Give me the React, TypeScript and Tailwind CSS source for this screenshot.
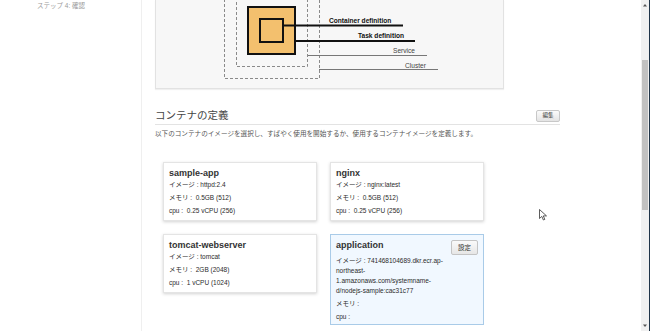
import React from 'react';

type Container = {
  name: string;
  lines: { label: string; value: string[] }[];
  highlight?: boolean;
};

const containers: Container[] = [
  {
    name: 'sample-app',
    lines: [
      { label: 'イメージ : ', value: ['httpd:2.4'] },
      { label: 'メモリ :  ', value: ['0.5GB (512)'] },
      { label: 'cpu :  ', value: ['0.25 vCPU (256)'] },
    ],
  },
  {
    name: 'nginx',
    lines: [
      { label: 'イメージ : ', value: ['nginx:latest'] },
      { label: 'メモリ :  ', value: ['0.5GB (512)'] },
      { label: 'cpu :  ', value: ['0.25 vCPU (256)'] },
    ],
  },
  {
    name: 'tomcat-webserver',
    lines: [
      { label: 'イメージ : ', value: ['tomcat'] },
      { label: 'メモリ :  ', value: ['2GB (2048)'] },
      { label: 'cpu :  ', value: ['1 vCPU (1024)'] },
    ],
  },
  {
    name: 'application',
    highlight: true,
    lines: [
      {
        label: 'イメージ : ',
        value: ['741468104689.dkr.ecr.ap-', 'northeast-', '1.amazonaws.com/systemname-', 'd/nodejs-sample:cac31c77'],
      },
      { label: 'メモリ : ', value: [''] },
      { label: 'cpu : ', value: [''] },
    ],
  },
];

const Diagram: React.FC = () => (
  <svg width="349" height="88" viewBox="0 0 349 88" className="block">
    {/* cluster / service boundaries */}
    <rect x="68.5" y="-20" width="95" height="98.5" fill="none" stroke="#8a8a8a" strokeDasharray="3 2" />
    <rect x="80.5" y="-20" width="71" height="86.5" fill="none" stroke="#8a8a8a" strokeDasharray="3 2" />
    {/* task + container */}
    <rect x="93" y="8" width="47" height="47" fill="#333" />
    <rect x="92" y="7" width="47" height="47" fill="#f3c06e" stroke="#111" strokeWidth="2" />
    <rect x="104" y="19" width="23" height="23" fill="#f3c06e" stroke="#111" strokeWidth="2" />
    <line x1="128" y1="25.5" x2="247" y2="25.5" stroke="#111" strokeWidth="2" />
    <line x1="140" y1="41" x2="259" y2="41" stroke="#111" strokeWidth="2" />
    <line x1="152" y1="55.5" x2="271" y2="55.5" stroke="#777" strokeWidth="1" />
    <line x1="163" y1="69.5" x2="282" y2="69.5" stroke="#777" strokeWidth="1" />
    <g fontFamily="'Liberation Sans', Arial, sans-serif" fontSize="6.6">
      <text x="173" y="23" fontWeight="700" fill="#111">Container definition</text>
      <text x="202" y="37.5" fontWeight="700" fill="#111">Task definition</text>
      <text x="237" y="53" fill="#444">Service</text>
      <text x="249" y="67.5" fill="#444">Cluster</text>
    </g>
  </svg>
);

const Card: React.FC<{ c: Container }> = ({ c }) => (
  <div
    className={
      c.highlight
        ? 'border border-[#a9cbe8] bg-[#f1f8ff] px-[5px] pt-[4px] pb-[2px]'
        : 'border border-[#e4e4e4] bg-white px-[5px] pt-[4px] pb-[4px] shadow-[0_1px_3px_rgba(0,0,0,0.18)]'
    }
  >
    <div className="flex items-start justify-between">
      <h3 className="text-[9px] font-bold leading-[12px] text-[#333]">{c.name}</h3>
      {c.highlight && (
        <button className="mt-[1px] h-[15px] w-[27px] rounded-[2px] border border-[#c4c4c4] bg-gradient-to-b from-[#fafafa] to-[#e6e6e6] text-[6.5px] text-[#333]">
          設定
        </button>
      )}
    </div>
    <div className="mt-[1px] flex flex-col gap-[3px] text-[6.5px] leading-[10px] text-[#2b2b2b]">
      {c.lines.map((l) => (
        <p key={l.label}>
          <span className="whitespace-pre">{l.label}</span>
          {l.value.map((v, i) => (
            <React.Fragment key={i}>
              {i > 0 && <br />}
              {v}
            </React.Fragment>
          ))}
        </p>
      ))}
    </div>
  </div>
);

const App: React.FC = () => {
  return (
    <div className="relative flex h-[331px] w-[650px] overflow-hidden bg-white font-['Liberation_Sans','Noto_Sans_CJK_JP',sans-serif]">
      {/* step sidebar */}
      <aside className="w-[142px] shrink-0 border-r border-[#efefef]">
        <p className="pl-[37px] pt-[1px] text-[6.5px] leading-[10px] text-[#9a9a9a]">ステップ 4: 確認</p>
      </aside>

      <main className="flex-1 pl-[13px]">
        <div className="h-[89px] w-[349px] border border-t-0 border-[#e2e2e2] bg-[#f7f7f7] shadow-[0_1px_1px_rgba(0,0,0,0.06)]">
          <Diagram />
        </div>

        <section className="mt-[19px] w-[405px]">
          <div className="flex items-end justify-between border-b border-[#e3e3e3] pb-[2px]">
            <h2 className="text-[10.5px] leading-[14px] text-[#444]">コンテナの定義</h2>
            <button className="h-[12px] w-[24px] rounded-[2px] border border-[#c8c8c8] bg-gradient-to-b from-[#fbfbfb] to-[#e4e4e4] text-[5.5px] leading-none text-[#333]">
              編集
            </button>
          </div>
          <p className="mt-[4px] text-[6.6px] leading-[10px] text-[#555]">
            以下のコンテナのイメージを選択し、すばやく使用を開始するか、使用するコンテナイメージを定義します。
          </p>
        </section>

        <div className="ml-[8px] mt-[23px] grid grid-cols-[154px_154px] items-start gap-x-[13px] gap-y-[13px]">
          {containers.map((c) => (
            <Card key={c.name} c={c} />
          ))}
        </div>
      </main>

      {/* scrollbar */}
      <div className="relative w-[8px] shrink-0 bg-[#f0f0f0]">
        <svg width="8" height="6" className="absolute left-0 top-[2px]">
          <path d="M2 4.5 L4 2 L6 4.5 Z" fill="#555" />
        </svg>
        <div className="absolute left-[1px] top-[60px] h-[150px] w-[6px] bg-[#c1c1c1]" />
        <svg width="8" height="6" className="absolute bottom-[2px] left-0">
          <path d="M2 1.5 L4 4 L6 1.5 Z" fill="#555" />
        </svg>
      </div>
      <div className="w-[1px] shrink-0 bg-[#1f3448]" />

      {/* mouse pointer */}
      <svg width="9" height="12" viewBox="0 0 9 12" className="absolute left-[539px] top-[209px]">
        <path d="M0.5 0.5 L0.5 9.5 L2.8 7.4 L4.4 11 L5.8 10.4 L4.3 6.9 L7.5 6.9 Z" fill="#fff" stroke="#333" strokeWidth="0.8" strokeLinejoin="round" />
      </svg>
    </div>
  );
};

export default App;
